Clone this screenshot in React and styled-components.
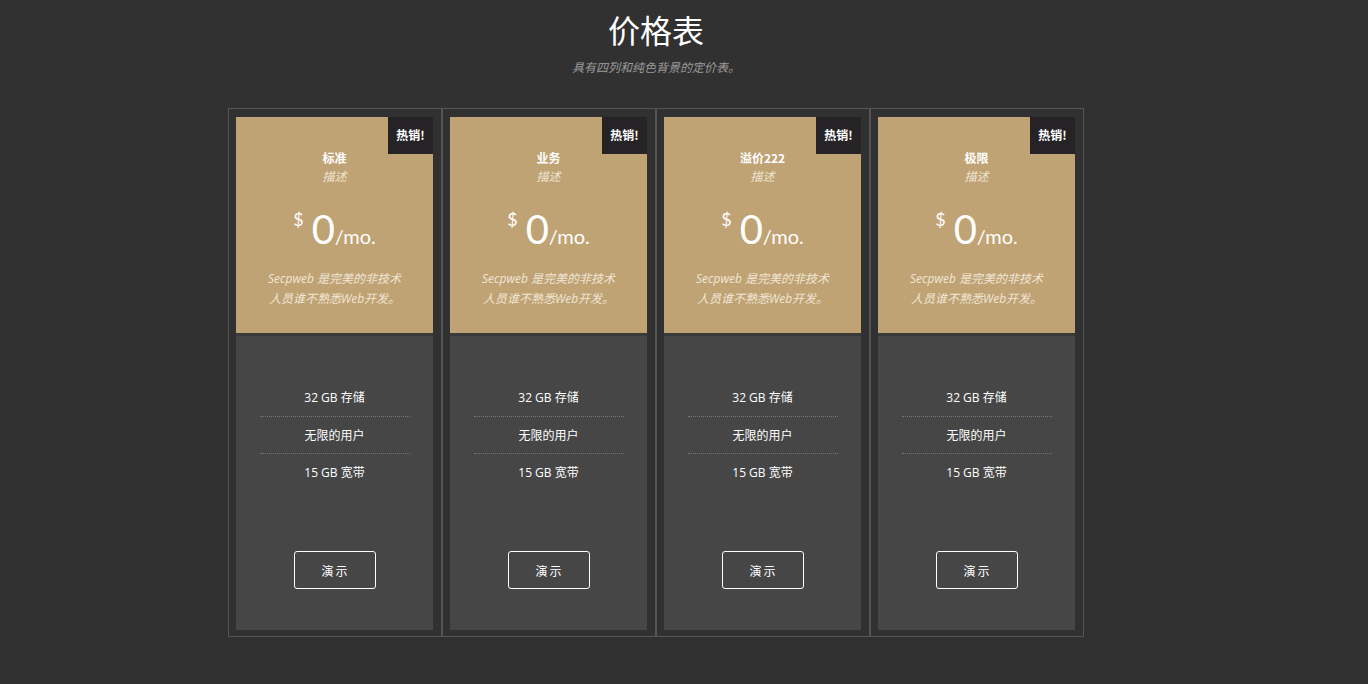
import React from "react";
import styled, { createGlobalStyle } from "styled-components";

const GlobalStyle = createGlobalStyle`
  html, body {
    margin: 0;
    padding: 0;
    background: #313131;
    font-family: "Open Sans", "Noto Sans CJK SC", sans-serif;
  }
`;

const Page = styled.div`
  width: 1312px;
  min-height: 684px;
  display: flex;
  flex-direction: column;
  align-items: center;
  padding-top: 8px;
  box-sizing: border-box;
`;

const Title = styled.h1`
  margin: 0;
  font-family: "Noto Sans CJK SC", sans-serif;
  font-size: 32px;
  font-weight: 400;
  line-height: 42px;
  color: #fff;
`;

const Subtitle = styled.p`
  margin: 9px 0 0;
  font-family: "Noto Sans CJK SC", sans-serif;
  font-size: 12px;
  font-style: italic;
  color: #9a9a9a;
  line-height: 16px;
`;

const Table = styled.div`
  display: flex;
  margin-top: 33px;
`;

const Column = styled.div`
  width: 214px;
  box-sizing: border-box;
  border: 1px solid #555;
  padding: 8px 8px 6px 7px;
`;

const Card = styled.div`
  width: 197px;
  display: flex;
  flex-direction: column;
`;

const Head = styled.div`
  position: relative;
  background: #bfa374;
  border-bottom: 3px solid #3a3a3a;
  display: flex;
  flex-direction: column;
  align-items: center;
  padding-top: 33px;
  height: 183px;
`;

const Badge = styled.div`
  position: absolute;
  top: 0;
  right: 0;
  width: 45px;
  height: 37px;
  padding-bottom: 3px;
  box-sizing: border-box;
  background: #252326;
  color: #fff;
  font-family: "Noto Sans CJK SC", sans-serif;
  font-size: 12px;
  font-weight: 700;
  display: flex;
  align-items: center;
  justify-content: center;
`;

const PlanName = styled.div`
  font-family: "Noto Sans CJK SC", sans-serif;
  font-size: 12px;
  font-weight: 700;
  color: #fff;
  line-height: 16px;
`;

const PlanNote = styled.div`
  font-family: "Noto Sans CJK SC", sans-serif;
  font-size: 12px;
  font-style: italic;
  color: #ede3d2;
  line-height: 18px;
  margin-top: 1px;
`;

const Price = styled.div`
  display: flex;
  align-items: baseline;
  margin-top: 19px;
  font-family: Lato, "Open Sans", sans-serif;
  color: #fff;
`;

const Currency = styled.span`
  font-size: 18px;
  align-self: flex-start;
  margin-top: 4px;
  margin-right: 8px;
`;

const Amount = styled.span`
  font-size: 40px;
  line-height: 50px;
`;

const Period = styled.span`
  font-size: 20px;
`;

const Blurb = styled.p`
  margin: 15px 0 0;
  width: 144px;
  text-align: center;
  font-family: "Open Sans", "Noto Sans CJK SC", sans-serif;
  font-size: 12px;
  font-style: italic;
  color: #f0e6d6;
  line-height: 20px;
`;

const Body = styled.div`
  height: 294px;
  background: #464646;
  display: flex;
  flex-direction: column;
  align-items: center;
  padding-top: 43px;
  box-sizing: border-box;
`;

const Features = styled.ul`
  list-style: none;
  margin: 0;
  padding: 0;
  width: 150px;
`;

const Feature = styled.li`
  height: 37px;
  line-height: 37px;
  text-align: center;
  font-family: "Open Sans", "Noto Sans CJK SC", sans-serif;
  font-size: 12px;
  color: #fff;
  border-top: ${({ $first }) => ($first ? "none" : "1px dotted #777")};
  box-sizing: border-box;
`;

const Button = styled.button`
  margin-top: 61px;
  width: 82px;
  height: 38px;
  background: transparent;
  border: 1px solid #fff;
  border-radius: 3px;
  color: #fff;
  font-family: "Noto Sans CJK SC", sans-serif;
  font-size: 12px;
  letter-spacing: 2px;
  padding: 0 0 0 2px;
  cursor: pointer;
`;

const plans = ["标准", "业务", "溢价222", "极限"];
const features = ["32 GB 存储", "无限的用户", "15 GB 宽带"];

const PlanCard = ({ name }) => (
  <Column>
    <Card>
      <Head>
        <Badge>热销!</Badge>
        <PlanName>{name}</PlanName>
        <PlanNote>描述</PlanNote>
        <Price>
          <Currency>$</Currency>
          <Amount>0</Amount>
          <Period>/mo.</Period>
        </Price>
        <Blurb>Secpweb 是完美的非技术人员谁不熟悉Web开发。</Blurb>
      </Head>
      <Body>
        <Features>
          {features.map((f, i) => (
            <Feature key={f} $first={i === 0}>
              {f}
            </Feature>
          ))}
        </Features>
        <Button>演示</Button>
      </Body>
    </Card>
  </Column>
);

const App = () => (
  <>
    <GlobalStyle />
    <Page>
      <Title>价格表</Title>
      <Subtitle>具有四列和纯色背景的定价表。</Subtitle>
      <Table>
        {plans.map((p) => (
          <PlanCard key={p} name={p} />
        ))}
      </Table>
    </Page>
  </>
);

export default App;
